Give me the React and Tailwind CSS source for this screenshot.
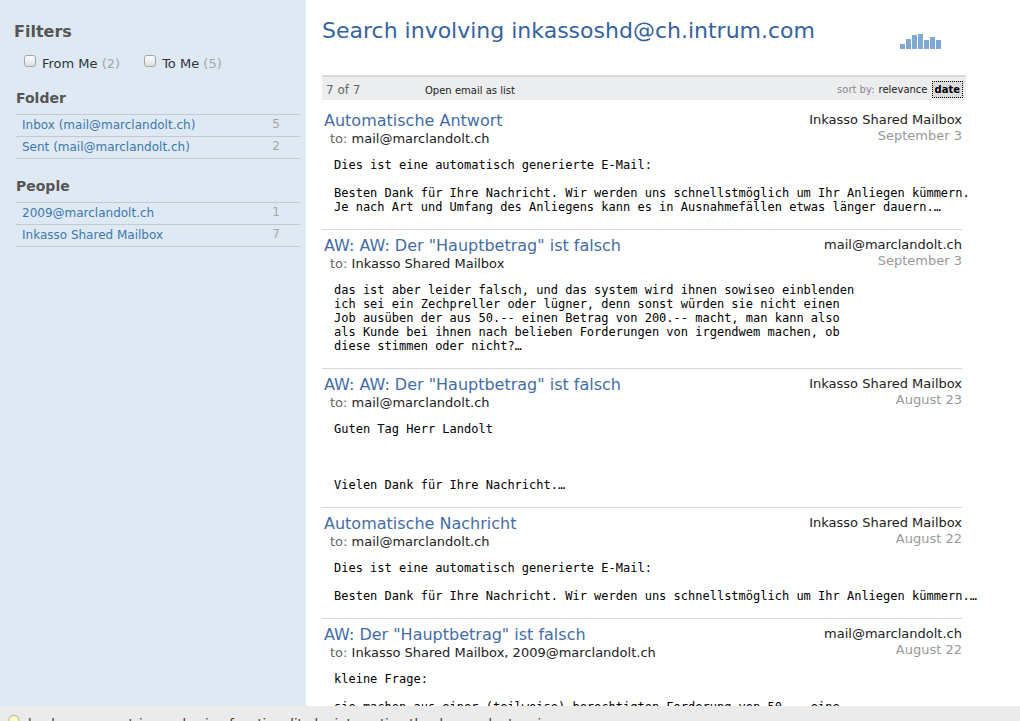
const messages = [
  {
    subject: 'Automatische Antwort',
    to: 'mail@marclandolt.ch',
    from: 'Inkasso Shared Mailbox',
    date: 'September 3',
    body: `Dies ist eine automatisch generierte E-Mail:

Besten Dank für Ihre Nachricht. Wir werden uns schnellstmöglich um Ihr Anliegen kümmern.
Je nach Art und Umfang des Anliegens kann es in Ausnahmefällen etwas länger dauern.…`,
  },
  {
    subject: 'AW: AW: Der "Hauptbetrag" ist falsch',
    to: 'Inkasso Shared Mailbox',
    from: 'mail@marclandolt.ch',
    date: 'September 3',
    body: `das ist aber leider falsch, und das system wird ihnen sowiseo einblenden
ich sei ein Zechpreller oder lügner, denn sonst würden sie nicht einen
Job ausüben der aus 50.-- einen Betrag von 200.-- macht, man kann also
als Kunde bei ihnen nach belieben Forderungen von irgendwem machen, ob
diese stimmen oder nicht?…`,
  },
  {
    subject: 'AW: AW: Der "Hauptbetrag" ist falsch',
    to: 'mail@marclandolt.ch',
    from: 'Inkasso Shared Mailbox',
    date: 'August 23',
    body: `Guten Tag Herr Landolt



Vielen Dank für Ihre Nachricht.…`,
  },
  {
    subject: 'Automatische Nachricht',
    to: 'mail@marclandolt.ch',
    from: 'Inkasso Shared Mailbox',
    date: 'August 22',
    body: `Dies ist eine automatisch generierte E-Mail:

Besten Dank für Ihre Nachricht. Wir werden uns schnellstmöglich um Ihr Anliegen kümmern.…`,
  },
  {
    subject: 'AW: Der "Hauptbetrag" ist falsch',
    to: 'Inkasso Shared Mailbox, 2009@marclandolt.ch',
    from: 'mail@marclandolt.ch',
    date: 'August 22',
    body: `kleine Frage:

sie machen aus einer (teilweise) berechtigten Forderung von 50.-- eine`,
  },
];

const groups = [
  { title: 'Folder', items: [['Inbox (mail@marclandolt.ch)', 5], ['Sent (mail@marclandolt.ch)', 2]] },
  { title: 'People', items: [['2009@marclandolt.ch', 1], ['Inkasso Shared Mailbox', 7]] },
];

function Check({ label, count }) {
  return (
    <label className="flex items-start">
      <input
        type="checkbox"
        className="mr-1.5 h-3 w-3 appearance-none rounded-[3px] border border-[#a5a5a5] bg-linear-to-b from-white to-[#dedede] checked:bg-[#3b78b0]"
      />
      <span className="pt-px text-[13px] leading-4 text-[#2e3338]">
        {label} <span className="text-[#a0a6ac]">({count})</span>
      </span>
    </label>
  );
}

function Sidebar() {
  return (
    <aside className="w-[306px] shrink-0 bg-[#dfe9f3] pr-1.5 pl-4">
      <h2 className="-ml-0.5 pt-[22px] text-base leading-5 font-bold text-[#555]">Filters</h2>
      <div className="mt-[13px] mb-4 ml-2 flex gap-6">
        <Check label="From Me" count={2} />
        <Check label="To Me" count={5} />
      </div>
      {groups.map((g) => (
        <section key={g.title} className="mb-[17px]">
          <h3 className="mb-1.5 text-sm leading-5 font-bold text-[#555]">{g.title}</h3>
          <ul className="border-t border-[#c6c9cd]">
            {g.items.map(([name, n]) => (
              <li key={name} className="flex justify-between border-b border-[#c6c9cd] pr-5 pl-1.5 text-[12px] leading-[21px]">
                <a href="#" className="text-[#3b78b0]">{name}</a>
                <span className="leading-[19px] text-[#a3a7ab]">{n}</span>
              </li>
            ))}
          </ul>
        </section>
      ))}
    </aside>
  );
}

function Message({ m }) {
  return (
    <article className="mr-1 border-b border-[#d6d6d6] pb-[15px]">
      <header className="flex justify-between pt-1.5">
        <div className="pl-0.5">
          <h2 className="text-base leading-5 text-[#446da6]">
            <a href="#">{m.subject}</a>
          </h2>
          <p className="pl-1.5 text-[13px] leading-4 text-[#222]">
            <span className="text-[#666]">to:</span> {m.to}
          </p>
        </div>
        <div className="pt-px text-right text-[13px] leading-4">
          <p className="text-[#222]">{m.from}</p>
          <p className="text-[#999]">{m.date}</p>
        </div>
      </header>
      <pre className="mt-[11px] ml-3 font-['DejaVu_Sans_Mono',monospace] text-[12px] leading-[14px] text-black">{m.body}</pre>
    </article>
  );
}

function Activity() {
  return (
    <svg className="mt-[33px] mr-6 h-4 w-[42px]" viewBox="0 0 42 16" fill="#7fa9d3" shapeRendering="crispEdges" aria-hidden="true">
      <path d="M0 11h5v5h-5zM6 6h5v10h-5zM12 2h5v14h-5zM18 1h5v15h-5zM24 7h5v9h-5zM30 4h5v12h-5zM36 7h5v9h-5z" />
    </svg>
  );
}

export default function App() {
  return (
    <div className="flex h-screen flex-col overflow-hidden bg-white font-['DejaVu_Sans',sans-serif]">
      <div className="flex min-h-0 flex-1">
        <Sidebar />
        <main className="min-w-0 flex-1 overflow-hidden pr-[54px] pl-4">
          <header className="flex h-[75px] items-start justify-between">
            <h1 className="pt-[17px] text-[22px] leading-7 whitespace-nowrap text-[#3563a0]">
              Search involving inkassoshd@ch.intrum.com
            </h1>
            <Activity />
          </header>
          <div className="mb-[5px] flex h-[25px] items-center border-t-2 border-[#d9d9d9] bg-[#ecedef] pt-0.5 pr-[3px] pl-1 text-[10px]">
            <span className="w-[99px] text-[12px] text-[#666]">7 of 7</span>
            <button className="mt-0.5 text-[#222]">Open email as list</button>
            <div className="ml-auto flex items-center gap-1">
              <span className="text-[#888]">sort by:</span>
              <button className="text-[#222]">relevance</button>
              <button className="border border-dotted border-black bg-[#dcdcdc] px-0.5 leading-[15px] font-bold text-black">date</button>
            </div>
          </div>
          {messages.map((m, i) => (
            <Message key={i} m={m} />
          ))}
        </main>
      </div>
      <footer className="h-[15px] shrink-0 overflow-hidden bg-[#ebebeb]">
        <p className="flex gap-2 pt-[9px] pl-2 text-[13px] leading-[18px] text-[#333]">
          <svg className="h-4 w-3" viewBox="0 0 12 16" aria-hidden="true">
            <path d="M6 .5C3 .5 1 2 1 5c0 3 2 4 2 6h6c0-2 2-3 2-6 0-3-2-4.500-5-4.500z" fill="#fdfbc8" stroke="#b5b59a" />
          </svg>
          <span>backup over entries and using functionality by interacting the demo adapters in</span>
        </p>
      </footer>
    </div>
  );
}
